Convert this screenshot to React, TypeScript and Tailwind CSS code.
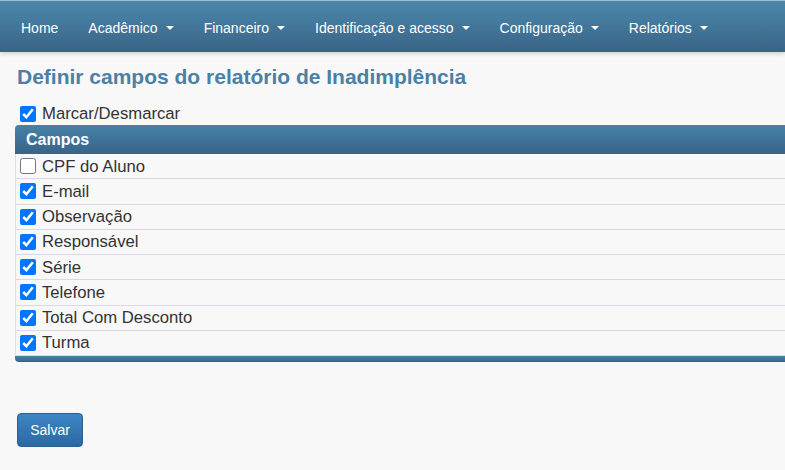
import React from "react";

const Caret = () => (
  <span className="ml-[8px] inline-block w-0 h-0 border-l-[4px] border-r-[4px] border-t-[4px] border-l-transparent border-r-transparent border-t-white align-middle" />
);

const navItems: { label: string; caret: boolean }[] = [
  { label: "Home", caret: false },
  { label: "Acadêmico", caret: true },
  { label: "Financeiro", caret: true },
  { label: "Identificação e acesso", caret: true },
  { label: "Configuração", caret: true },
  { label: "Relatórios", caret: true },
];

const rows: { label: string; checked: boolean }[] = [
  { label: "CPF do Aluno", checked: false },
  { label: "E-mail", checked: true },
  { label: "Observação", checked: true },
  { label: "Responsável", checked: true },
  { label: "Série", checked: true },
  { label: "Telefone", checked: true },
  { label: "Total Com Desconto", checked: true },
  { label: "Turma", checked: true },
];

export default function App() {
  return (
    <div
      className="w-[785px] h-[470px] overflow-hidden bg-[#f8f8f8] text-[#333]"
      style={{ fontFamily: '"Liberation Sans", Arial, sans-serif' }}
    >
      <nav className="h-[52px] border-t border-[#9fbdd2] bg-gradient-to-b from-[#4a88ab] to-[#3a6487] shadow-[0_2px_4px_rgba(0,0,0,0.15)] flex items-center pl-[6px] pt-[3px]">
        {navItems.map((n) => (
          <div key={n.label} className="px-[15px] text-[14px] text-white flex items-center">
            <span>{n.label}</span>
            {n.caret && <Caret />}
          </div>
        ))}
      </nav>

      <div className="pl-[15px]">
        <h3 className="pl-[2px] mt-[13px] text-[21px] leading-[24px] font-bold text-[#4a80a6]">
          Definir campos do relatório de Inadimplência
        </h3>

        <label className="flex items-center mt-[14px] h-[21px] pl-[5px] text-[16.7px]">
          <input type="checkbox" defaultChecked className="w-[16px] h-[16px] m-0" />
          <span className="ml-[6px]">Marcar/Desmarcar</span>
        </label>

        <div className="mt-[1px]">
          <div className="h-[29px] rounded-tl-[4px] bg-gradient-to-b from-[#4682a6] to-[#386488] flex items-center pl-[11px] text-white font-bold text-[16px]">
            Campos
          </div>
          <div className="border-l border-[#dedde6]">
            {rows.map((r) => (
              <label
                key={r.label}
                className="h-[25.25px] border-b border-[#d9d7e8] flex items-center pl-[4px] text-[16.7px]"
              >
                <input type="checkbox" defaultChecked={r.checked} className="w-[16px] h-[16px] m-0" />
                <span className="ml-[6px]">{r.label}</span>
              </label>
            ))}
          </div>
          <div className="h-[6px] rounded-bl-[4px] bg-gradient-to-b from-[#4682a6] to-[#386488]" />
        </div>

        <button className="mt-[51px] ml-[2px] w-[66px] h-[34px] rounded-[4px] border border-[#2a5f8f] bg-gradient-to-b from-[#3d86c4] to-[#2b68a2] text-white text-[14px]">
          Salvar
        </button>
      </div>
    </div>
  );
}
